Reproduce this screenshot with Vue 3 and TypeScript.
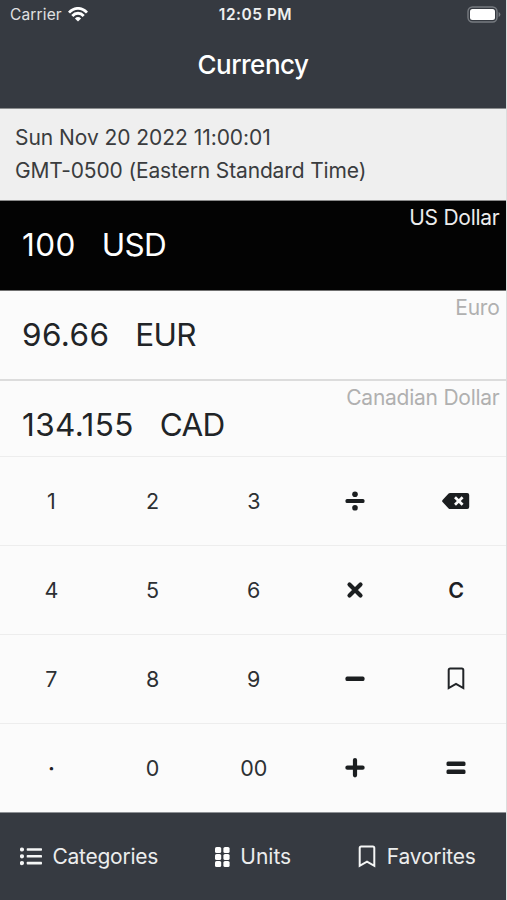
<script setup lang="ts">
interface Rate {
  amount: string
  code: string
  name: string
  active?: boolean
}

interface Key {
  id: string
  label?: string
  bold?: boolean
}

const rates: Rate[] = [
  { amount: '100', code: 'USD', name: 'US Dollar', active: true },
  { amount: '96.66', code: 'EUR', name: 'Euro' },
  { amount: '134.155', code: 'CAD', name: 'Canadian Dollar' },
]

const keyRows: Key[][] = [
  [{ id: '1', label: '1' }, { id: '2', label: '2' }, { id: '3', label: '3' }, { id: 'divide' }, { id: 'delete' }],
  [{ id: '4', label: '4' }, { id: '5', label: '5' }, { id: '6', label: '6' }, { id: 'times' }, { id: 'clear', label: 'C', bold: true }],
  [{ id: '7', label: '7' }, { id: '8', label: '8' }, { id: '9', label: '9' }, { id: 'minus' }, { id: 'bookmark' }],
  [{ id: 'dot', label: '·', bold: true }, { id: '0', label: '0' }, { id: '00', label: '00' }, { id: 'plus' }, { id: 'equals' }],
]
</script>

<template>
  <main class="screen">
    <header class="header">
      <div class="status">
        <div class="carrier">
          <span>Carrier</span>
          <svg width="20" height="15" viewBox="0 0 20 15" fill="none" stroke="#fff" stroke-width="2.8">
            <path d="M1 5.7C6-.1 14-.1 19 5.7" />
            <path d="M4.3 9C7.6 5.3 12.4 5.3 15.7 9" />
            <path d="M10 14.6 6.9 11.4Q10 8.7 13.1 11.4Z" fill="#fff" stroke="none" />
          </svg>
        </div>
        <span class="clock">12:05 PM</span>
        <svg class="battery" width="34" height="17" viewBox="0 0 34 17">
          <rect x="1" y="1" width="29" height="15" rx="4.5" fill="none" stroke="#777b80" stroke-width="1.4" />
          <rect x="3" y="3" width="25" height="11" rx="2.5" fill="#fff" />
          <path d="M31.6 6v5q1.8-.8 1.8-2.5T31.6 6Z" fill="#777b80" />
        </svg>
      </div>
      <h1 class="title">Currency</h1>
    </header>

    <section class="stamp">
      <span class="stamp-date">Sun Nov 20 2022 11:00:01</span>
      <span class="stamp-zone">GMT-0500 (Eastern Standard Time)</span>
    </section>

    <section class="rates">
      <div v-for="rate in rates" :key="rate.code" class="rate" :class="{ active: rate.active }">
        <div class="value">
          <span class="amount">{{ rate.amount }}</span>
          <span class="code">{{ rate.code }}</span>
        </div>
        <span class="name">{{ rate.name }}</span>
      </div>
    </section>

    <section class="keypad">
      <div v-for="(row, i) in keyRows" :key="i" class="key-row">
        <button v-for="key in row" :key="key.id" type="button" class="key" :class="{ bold: key.bold }">
          <span v-if="key.label">{{ key.label }}</span>
          <svg v-else-if="key.id === 'divide'" width="20" height="20" viewBox="0 0 20 20">
            <rect x=".5" y="8" width="19" height="4" rx="1.5" />
            <circle cx="10" cy="3.2" r="2.8" />
            <circle cx="10" cy="16.8" r="2.8" />
          </svg>
          <svg v-else-if="key.id === 'delete'" width="28" height="18" viewBox="0 0 28 18">
            <path d="M8 1h17.2A2 2 0 0 1 27.2 3v12a2 2 0 0 1-2 2H8a2 2 0 0 1-1.4-.6L.8 10.3a1.8 1.8 0 0 1 0-2.6l5.8-6.1A2 2 0 0 1 8 1Z" />
            <path d="m13 5.2 7.6 7.6m0-7.6L13 12.8" fill="none" stroke="#fbfbfb" stroke-width="2.7" />
          </svg>
          <svg v-else-if="key.id === 'times'" width="20" height="20" viewBox="0 0 20 20">
            <path d="m4.5 4.5 11 11m0-11-11 11" class="stroke" />
          </svg>
          <svg v-else-if="key.id === 'minus'" width="20" height="20" viewBox="0 0 20 20">
            <rect x=".5" y="7.6" width="19" height="4.4" rx="1.6" />
          </svg>
          <svg v-else-if="key.id === 'plus'" width="20" height="20" viewBox="0 0 20 20">
            <path d="M2.4 9.7h15.2M10 2.1v15.2" class="stroke" />
          </svg>
          <svg v-else-if="key.id === 'equals'" width="20" height="20" viewBox="0 0 20 20">
            <rect x=".5" y="3.6" width="19" height="4.4" rx="1.5" />
            <rect x=".5" y="11.6" width="19" height="4.4" rx="1.5" />
          </svg>
          <svg v-else width="18" height="24" viewBox="0 0 18 24">
            <path d="M1.7 21V2.9Q1.7 1.4 3.2 1.4h11.6q1.5 0 1.5 1.5V21L9 16.8Z" fill="none" stroke="#212427" stroke-width="2" />
          </svg>
        </button>
      </div>
    </section>

    <nav class="tabs">
      <a class="tab">
        <svg width="22" height="19" viewBox="0 0 22 19" fill="#f5f6f6">
          <circle cx="2" cy="2.5" r="2.1" />
          <circle cx="2" cy="9.3" r="2.1" />
          <circle cx="2" cy="16.1" r="2.1" />
          <rect x="6.7" y="1.2" width="15.3" height="2.6" rx=".7" />
          <rect x="6.7" y="8" width="15.3" height="2.6" rx=".7" />
          <rect x="6.7" y="14.8" width="15.3" height="2.6" rx=".7" />
        </svg>
        <span class="categories">Categories</span>
      </a>
      <a class="tab">
        <svg width="15" height="20" viewBox="0 0 15 20" fill="#fff">
          <rect x="0" y="0" width="6.2" height="6" rx="1.6" />
          <rect x="8.4" y="0" width="6.2" height="6" rx="1.6" />
          <rect x="0" y="7" width="6.2" height="6" rx="1.6" />
          <rect x="8.4" y="7" width="6.2" height="6" rx="1.6" />
          <rect x="0" y="14" width="6.2" height="6" rx="1.6" />
          <rect x="8.4" y="14" width="6.2" height="6" rx="1.6" />
        </svg>
        <span class="units">Units</span>
      </a>
      <a class="tab">
        <svg width="18" height="24" viewBox="0 0 18 24">
          <path d="M1.7 20.8V3Q1.7 1.5 3.2 1.5h11.6q1.5 0 1.5 1.5v17.8L9 16.6Z" fill="none" stroke="#f5f6f6" stroke-width="2" />
        </svg>
        <span class="favorites">Favorites</span>
      </a>
    </nav>
  </main>
</template>

<style>
body {
  background: #dcdddd;
}
</style>

<style scoped>
.screen {
  width: 506px;
  height: 900px;
  display: flex;
  flex-direction: column;
  overflow: hidden;
  box-sizing: border-box;
  background: #fbfbfb;
  color: #212427;
  font-family: Inter, "Liberation Sans", sans-serif;
  font-size: 21px;
}

.header {
  height: 108px;
  flex: none;
  border-bottom: 1px solid #8b8d8e;
  background: #363a41;
  color: #fff;
}

.status {
  height: 30px;
  display: grid;
  grid-template-columns: 1fr auto 1fr;
  align-items: center;
  padding: 0 5px 2px 10px;
  box-sizing: border-box;
  font-size: 15.5px;
}

.carrier {
  display: flex;
  align-items: center;
  gap: 6px;
  color: #e0e1e2;
  letter-spacing: 0.15px;
}

.clock {
  font-weight: 600;
  color: #eeeff0;
  letter-spacing: 0.5px;
}

.battery {
  justify-self: end;
}

.title {
  margin: 0;
  line-height: 70px;
  text-align: center;
  font-size: 26px;
  font-weight: 500;
  letter-spacing: -0.5px;
}

.stamp {
  height: 92px;
  flex: none;
  box-sizing: border-box;
  display: flex;
  flex-direction: column;
  padding: 13px 15px 0;
  background: #efefef;
  border-bottom: 1px solid #8a8a8a;
  color: #3a3c3e;
  line-height: 32.5px;
  white-space: nowrap;
}

.stamp-date {
  letter-spacing: -0.05px;
}

.stamp-zone {
  letter-spacing: -0.14px;
}

.rates {
  height: 255px;
  flex: none;
  overflow: hidden;
}

.rate {
  height: 90px;
  box-sizing: border-box;
  display: flex;
  justify-content: space-between;
  padding: 0 7px 0 22px;
  border-bottom: 2px solid #dcdcdc;
}

.rate.active {
  background: #030303;
  border-bottom: 1px solid #707070;
  color: #fff;
}

.value {
  display: flex;
  gap: 26px;
  font-size: 31.5px;
  line-height: 88px;
}

.amount {
  letter-spacing: 0.4px;
}

.code {
  letter-spacing: -0.7px;
}

.name {
  line-height: 34px;
  letter-spacing: -0.25px;
  margin-right: -0.5px;
  color: #b0b0b0;
}

.active .name {
  color: #ececec;
}

.keypad {
  height: 356px;
  flex: none;
  display: grid;
  grid-template-rows: repeat(4, 89px);
}

.key-row {
  display: grid;
  grid-template-columns: repeat(5, 101.2px);
  box-sizing: border-box;
  border-top: 1px solid #ededed;
  padding-left: 0.8px;
}

.key {
  display: flex;
  align-items: center;
  justify-content: center;
  padding: 0 0 1px;
  border: 0;
  background: none;
  color: #2d3033;
  font: inherit;
  font-size: 21.5px;
}

.key.bold {
  font-weight: 600;
  color: #1d2023;
}

.key svg {
  fill: #1b1e20;
}

.key .stroke {
  fill: none;
  stroke: #1b1e20;
  stroke-width: 4.2;
  stroke-linecap: round;
}

.tabs {
  flex: 1;
  display: grid;
  grid-template-columns: repeat(3, 164px);
  justify-content: center;
  box-sizing: border-box;
  border-top: 1px solid #8e9195;
  background: #363a41;
  color: #eceded;
}

.tab {
  display: flex;
  align-items: center;
  justify-content: center;
  gap: 10.5px;
}

.categories {
  letter-spacing: -0.25px;
}

.favorites {
  letter-spacing: -0.2px;
}
</style>
